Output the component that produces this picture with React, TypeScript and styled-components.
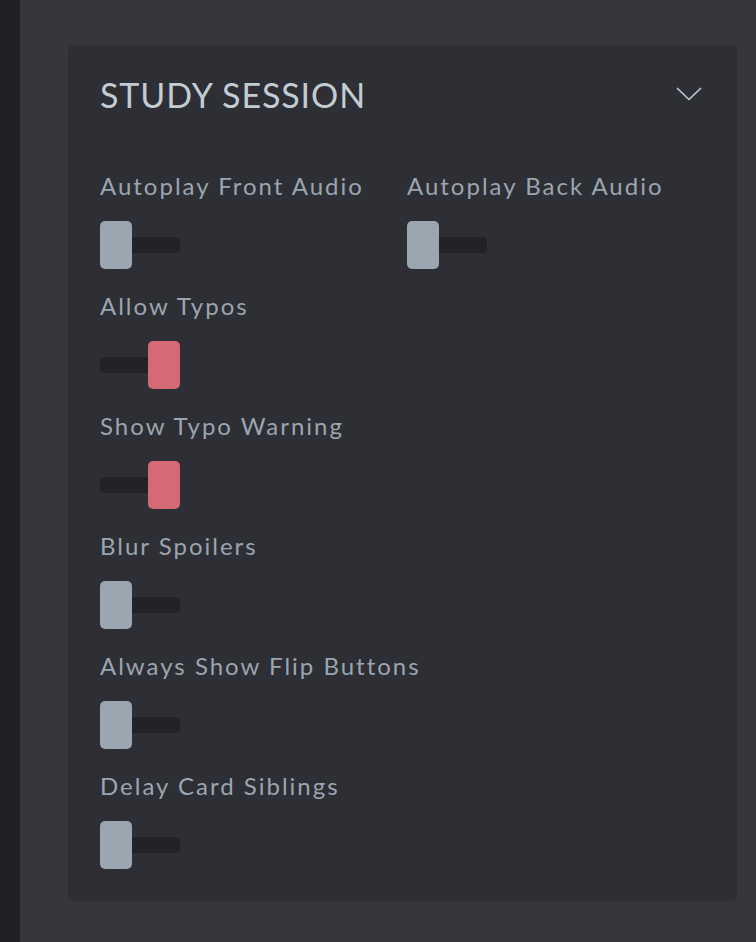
import React from "react";
import styled, { createGlobalStyle } from "styled-components";

const Global = createGlobalStyle`
  html, body { margin: 0; padding: 0; background: #36373c; }
  body { font-family: Lato, "Open Sans", sans-serif; }
`;

const Page = styled.div`
  display: flex;
  min-height: 942px;
  background: #36373c;
`;

const Strip = styled.div`
  flex: 0 0 20px;
  background: #202124;
`;

const Main = styled.main`
  flex: 1;
  min-width: 0;
  padding: 45px 19px 0 48px;
`;

const Card = styled.section`
  background: #2e2f34;
  border-radius: 6px;
  padding: 24px 32px 13px 32px;
`;

const Header = styled.div`
  display: flex;
  align-items: center;
  justify-content: space-between;
  height: 50px;
  margin-bottom: 49px;
`;

const Title = styled.h2`
  margin: 0;
  font-size: 34px;
  font-weight: 400;
  letter-spacing: 0.9px;
  color: #c3cbd3;
`;

const Chevron = styled.svg`
  width: 26px;
  height: 14px;
  margin-right: 3px;
`;

const Row = styled.div`
  display: flex;
`;

const Field = styled.div`
  flex: 0 0 307px;
  display: flex;
  flex-direction: column;
  gap: 17px;
  white-space: nowrap;
  padding-bottom: 19px;
  &:last-child {
    flex: 1 1 auto;
  }
`;

const Label = styled.span`
  font-size: 24px;
  line-height: 36px;
  color: #9aa5b1;
  letter-spacing: 2px;
`;

const Toggle = styled.div<{ $on: boolean }>`
  position: relative;
  width: 80px;
  height: 48px;
  display: flex;
  align-items: center;
  justify-content: ${(p) => (p.$on ? "flex-end" : "flex-start")};
  &::before {
    content: "";
    position: absolute;
    left: 0;
    right: 0;
    top: 16px;
    height: 16px;
    border-radius: 4px;
    background: #222326;
  }
`;

const Thumb = styled.div<{ $on: boolean }>`
  position: relative;
  width: 32px;
  height: 48px;
  border-radius: 5px;
  background: ${(p) => (p.$on ? "#d66a74" : "#9ba6b1")};
`;

const Switch = ({ label, on }: { label: string; on: boolean }) => (
  <Field>
    <Label>{label}</Label>
    <Toggle $on={on}>
      <Thumb $on={on} />
    </Toggle>
  </Field>
);

export default function App() {
  return (
    <Page>
      <Global />
      <Strip />
      <Main>
        <Card>
          <Header>
            <Title>STUDY SESSION</Title>
            <Chevron viewBox="0 0 26 14" fill="none">
              <polyline points="1.5,1.5 13,12.5 24.5,1.5" stroke="#c2c8cf" strokeWidth="1.7" strokeLinecap="round" strokeLinejoin="round" />
            </Chevron>
          </Header>
          <Row>
            <Switch label="Autoplay Front Audio" on={false} />
            <Switch label="Autoplay Back Audio" on={false} />
          </Row>
          <Row><Switch label="Allow Typos" on={true} /></Row>
          <Row><Switch label="Show Typo Warning" on={true} /></Row>
          <Row><Switch label="Blur Spoilers" on={false} /></Row>
          <Row><Switch label="Always Show Flip Buttons" on={false} /></Row>
          <Row><Switch label="Delay Card Siblings" on={false} /></Row>
        </Card>
      </Main>
    </Page>
  );
}
